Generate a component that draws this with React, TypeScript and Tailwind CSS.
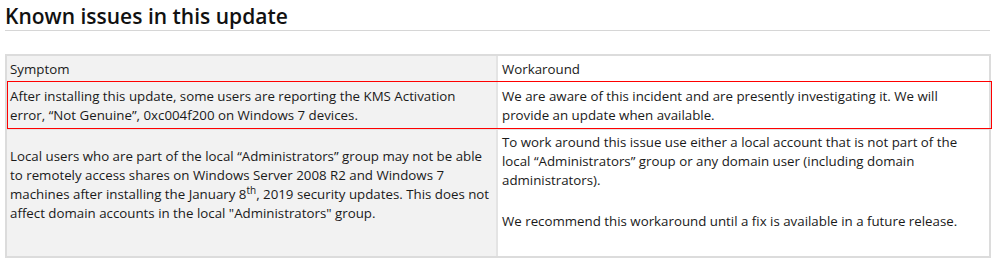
const font = { fontFamily: '"Open Sans", "Liberation Sans", sans-serif' };

function Cell({ left, children, className = "" }: { left?: boolean; children: React.ReactNode; className?: string }) {
  return (
    <div
      className={`whitespace-nowrap ${left ? "w-[491px] shrink-0 border-r-2 border-r-[#e4e4e4] bg-[#f2f2f2] pl-[3px] pr-[3px]" : "flex-1 bg-white pl-[4px] pr-[4px]"} ${className}`}
    >
      {children}
    </div>
  );
}

export default function App() {
  return (
    <div className="h-[265px] w-[1000px] bg-white text-[#1a1a1a]" style={font}>
      <div className="ml-[5px] mr-[10px] border-b border-b-[#d6d6d6] pt-[2px]">
        <h2 className="text-[21px] font-semibold leading-[28px] text-[#111]">Known issues in this update</h2>
      </div>

      <div className="ml-[5px] mt-[23px] w-[986px] border-2 border-[#dcdcdc] text-[13.3px] leading-[19px]">
        <div className="flex h-[26px] border-b border-b-[#e3e3e3]">
          <Cell left className="pt-[4px]">Symptom</Cell>
          <Cell className="pt-[4px]">Workaround</Cell>
        </div>

        <div className="relative flex h-[48px] border-b border-b-[#e3e3e3]">
          <Cell left className="pt-[5px]">
            After installing this update, some users are reporting the KMS Activation
            <br />
            error, “Not Genuine”, 0xc004f200 on Windows 7 devices.
          </Cell>
          <Cell className="pt-[5px]">
            We are aware of this incident and are presently investigating it. We will
            <br />
            provide an update when available.
          </Cell>
          <div className="pointer-events-none absolute -top-px -right-[3px] bottom-0 left-0 border border-[#ff0000]" />
        </div>

        <div className="flex h-[126px]">
          <Cell left className="pt-[17px]">
            Local users who are part of the local “Administrators” group may not be able
            <br />
            to remotely access shares on Windows Server 2008 R2 and Windows 7
            <br />
            machines after installing the January 8<sup className="text-[10px]">th</sup>, 2019 security updates. This does not
            <br />
            affect domain accounts in the local "Administrators" group.
          </Cell>
          <Cell className="pt-[3px]">
            <p>
              To work around this issue use either a local account that is not part of the
              <br />
              local “Administrators” group or any domain user (including domain
              <br />
              administrators).
            </p>
            <p className="mt-[22px]">We recommend this workaround until a fix is available in a future release.</p>
          </Cell>
        </div>
      </div>
    </div>
  );
}
